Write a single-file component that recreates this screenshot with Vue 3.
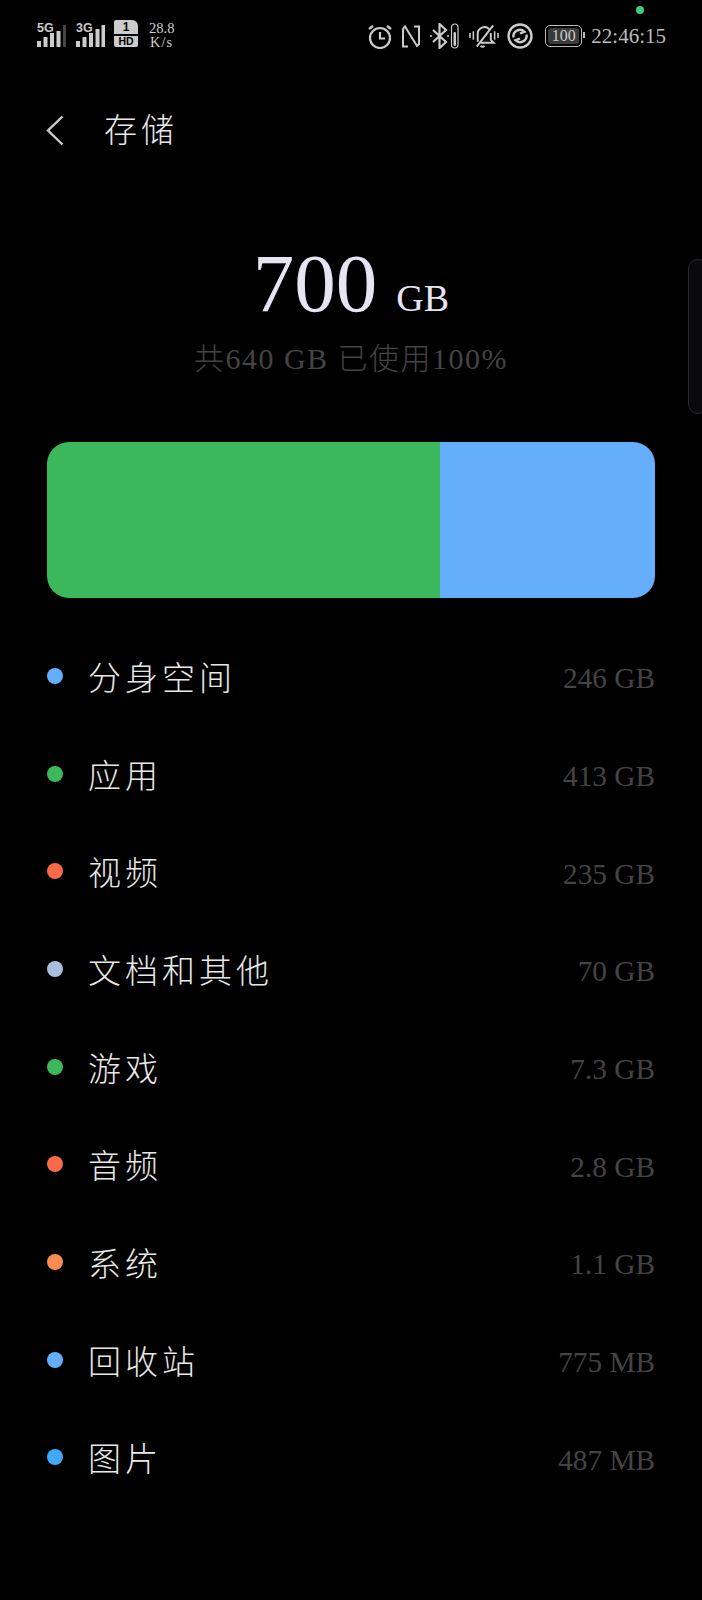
<script setup>
const items = [
  { name: '分身空间', size: '246 GB', color: '#64aefb' },
  { name: '应用', size: '413 GB', color: '#3cb85c' },
  { name: '视频', size: '235 GB', color: '#f96a48' },
  { name: '文档和其他', size: '70 GB', color: '#a9bddc' },
  { name: '游戏', size: '7.3 GB', color: '#3cb85c' },
  { name: '音频', size: '2.8 GB', color: '#f96a48' },
  { name: '系统', size: '1.1 GB', color: '#fb8c50' },
  { name: '回收站', size: '775 MB', color: '#64aefb' },
  { name: '图片', size: '487 MB', color: '#3fa9fb' }
]
</script>

<template>
<div class="page">
  <span class="camera-dot"></span>
  <span class="side-handle"></span>

  <div class="status">
    <div class="status-left">
      <svg class="signal" width="30" height="28" viewBox="0 0 30 28">
        <text x="0" y="13" class="net">5G</text>
        <rect x="0" y="22" width="4" height="6" fill="#ccc"/>
        <rect x="6.500" y="18" width="4" height="10" fill="#ccc"/>
        <rect x="13" y="14" width="4" height="14" fill="#ccc"/>
        <rect x="19.500" y="12" width="4" height="16" fill="#ccc"/>
        <rect x="26" y="6" width="3" height="22" fill="#444"/>
      </svg>
      <svg class="signal" width="30" height="28" viewBox="0 0 30 28">
        <text x="0" y="13" class="net">3G</text>
        <rect x="0" y="22" width="4" height="6" fill="#ccc"/>
        <rect x="6.500" y="18" width="4" height="10" fill="#ccc"/>
        <rect x="13" y="14" width="4" height="14" fill="#ccc"/>
        <rect x="19.500" y="10" width="4" height="18" fill="#ccc"/>
        <rect x="25.500" y="6" width="3.500" height="22" fill="#ccc"/>
      </svg>
      <div class="sim">
        <span class="sim-num">1</span>
        <span class="sim-hd">HD</span>
      </div>
      <div class="speed">
        <span>28.8</span>
        <span class="speed-unit">K/s</span>
      </div>
    </div>
    <div class="status-right">
      <svg width="26" height="25" viewBox="0 0 26 25" fill="none" stroke="#ccc" stroke-width="2.200">
        <circle cx="13" cy="14" r="10"/>
        <path d="M13 8v6.500h5"/>
        <path d="M2 5l4-3M24 5l-4-3"/>
      </svg>
      <svg width="20" height="23" viewBox="0 0 20 23" fill="none" stroke="#ccc" stroke-width="2">
        <path d="M7 21.500H2V4L4 1.500 16 21l2-2V1.500h-5"/>
      </svg>
      <svg class="bt" width="30" height="26" viewBox="0 0 30 26" fill="none" stroke="#ccc" stroke-width="2.200">
        <path d="M4 7l13 12-6.500 6V1L17 7 4 19"/>
        <circle cx="2" cy="13" r="1" fill="#ccc" stroke="none"/>
        <circle cx="19" cy="13" r="1" fill="#ccc" stroke="none"/>
        <rect x="22.500" y="1" width="6.500" height="24" rx="3.200" stroke-width="1.200"/>
        <rect x="24.500" y="9" width="2.500" height="14" rx="1.200" fill="#ccc" stroke="none"/>
      </svg>
      <svg width="30" height="26" viewBox="0 0 31 26" fill="none" stroke="#ccc" stroke-width="2">
        <path d="M9 19V11a7 7 0 0 1 12-5"/>
        <path d="M22.500 10v7l3 3H12"/>
        <path d="M12 23c1 1.500 3 1.500 4 0"/>
        <path d="M8 24L25 2"/>
        <path d="M1 10v5M4.500 8v9M26.500 8v9M30 10v5" stroke-width="1.600"/>
      </svg>
      <svg class="swirl" width="26" height="26" viewBox="0 0 26 26" fill="none" stroke="#ccc" stroke-width="2.400">
        <circle cx="13" cy="13" r="11.500"/>
        <path d="M6.500 14.500a6.500 6.500 0 0 1 11-5.700L13 10.500"/>
        <path d="M19.500 11.500a6.500 6.500 0 0 1-11 5.700l4.500-1.700"/>
      </svg>
      <div class="battery">
        <span class="battery-level">100</span>
        <i class="battery-tip"></i>
      </div>
      <span class="clock">22:46:15</span>
    </div>
  </div>

  <div class="header">
    <svg width="18" height="31" viewBox="0 0 18 31" fill="none" stroke="#ccc" stroke-width="2.400">
      <path d="M16.500 1.500L2 15.500l14.500 14"/>
    </svg>
    <span class="title">存储</span>
  </div>

  <div class="summary">
    <div class="used"><span class="used-num">700</span><span class="used-unit">GB</span></div>
    <div class="total">共640 GB 已使用100%</div>
  </div>

  <div class="bar">
    <div class="bar-app"></div>
    <div class="bar-clone"></div>
  </div>

  <ul class="list">
    <li v-for="item in items" :key="item.name" class="row">
      <span class="dot" :style="{ background: item.color }"></span>
      <span class="name">{{ item.name }}</span>
      <span class="size">{{ item.size }}</span>
    </li>
  </ul>
</div>
</template>

<style>
html, body {
  background: #000;
}
</style>

<style scoped>
.page {
  position: relative;
  width: 702px;
  height: 1600px;
  background: #000;
  overflow: hidden;
  font-family: "Liberation Serif", "Noto Sans CJK SC", serif;
}

.camera-dot {
  position: absolute;
  left: 636px;
  top: 6px;
  width: 8px;
  height: 8px;
  border-radius: 50%;
  background: #3fd07a;
}

.side-handle {
  position: absolute;
  left: 688px;
  top: 259px;
  width: 20px;
  height: 155px;
  box-sizing: border-box;
  border: 1px solid #2a2a2c;
  border-radius: 12px;
  background: #0a0a0c;
}

.status {
  display: flex;
  justify-content: space-between;
  align-items: center;
  height: 72px;
  padding: 0 36px 0 37px;
}

.status-left,
.status-right {
  display: flex;
  align-items: center;
}

.status-left {
  gap: 9px;
}

.status-right {
  gap: 8px;
}

.signal {
  margin-top: -6px;
}

.net {
  font-family: "Liberation Sans", sans-serif;
  font-size: 12.500px;
  font-weight: bold;
  fill: #ccc;
}

.sim {
  display: flex;
  flex-direction: column;
  gap: 2px;
  width: 24px;
  margin-left: -1px;
  margin-top: -6px;
  font-family: "Liberation Sans", sans-serif;
  font-weight: bold;
  text-align: center;
}

.sim-num {
  height: 14px;
  border-radius: 2px 6px 0 0;
  background: #ccc;
  color: #000;
  font-size: 12px;
  line-height: 14px;
}

.sim-hd {
  height: 11px;
  border-radius: 0 0 2px 2px;
  background: #ccc;
  color: #000;
  font-size: 10.500px;
  line-height: 11px;
}

.speed {
  display: flex;
  flex-direction: column;
  align-items: center;
  margin-left: 2px;
  margin-top: -2px;
  color: #ccc;
  font-size: 14.500px;
  line-height: 14px;
}

.speed-unit {
  letter-spacing: 1px;
}

.bt {
  margin-right: 2px;
}

.swirl {
  margin-right: 4px;
}

.battery {
  display: flex;
  align-items: center;
  position: relative;
  box-sizing: border-box;
  width: 37px;
  height: 22px;
  padding: 2px;
  border: 1.500px solid #bbb;
  border-radius: 5px;
}

.battery-level {
  flex: 1;
  height: 100%;
  border-radius: 3px;
  background: #3a3a3a;
  color: #ccc;
  font-size: 16px;
  line-height: 15px;
  text-align: center;
}

.battery-tip {
  position: absolute;
  right: -4px;
  top: 6px;
  width: 2px;
  height: 6px;
  background: #bbb;
}

.clock {
  margin-left: 1px;
  color: #bbb;
  font-size: 21px;
}

.header {
  display: flex;
  align-items: center;
  height: 46px;
  margin-top: 35px;
  padding-left: 46px;
}

.title {
  margin-left: 40px;
  margin-bottom: 4px;
  color: #e8e8e8;
  font-size: 33px;
  font-weight: 300;
  letter-spacing: 4px;
}

.summary {
  margin-top: 88px;
  text-align: center;
}

.used {
  height: 84px;
  line-height: 84px;
  color: #e6e4f2;
}

.used-num {
  font-size: 83px;
}

.used-unit {
  margin-left: 19px;
  font-size: 38px;
}

.total {
  margin-top: 14px;
  color: #444;
  font-size: 30px;
  font-weight: 300;
  letter-spacing: 1.500px;
  line-height: 40px;
}

.bar {
  display: flex;
  height: 156px;
  margin: 63px 47px 0;
  border-radius: 22px;
  overflow: hidden;
}

.bar-app {
  width: 393px;
  background: #3cb85c;
}

.bar-clone {
  flex: 1;
  background: #64aefb;
}

.list {
  margin: 29px 47px 0;
  padding: 0;
  list-style: none;
}

.row {
  display: flex;
  align-items: center;
  height: 97.700px;
}

.dot {
  width: 16px;
  height: 16px;
  border-radius: 50%;
}

.name {
  margin-left: 25px;
  color: #e8e8e8;
  font-size: 33px;
  font-weight: 300;
  letter-spacing: 4px;
}

.size {
  margin-left: auto;
  margin-top: 6px;
  color: #444;
  font-size: 29.300px;
}
</style>
